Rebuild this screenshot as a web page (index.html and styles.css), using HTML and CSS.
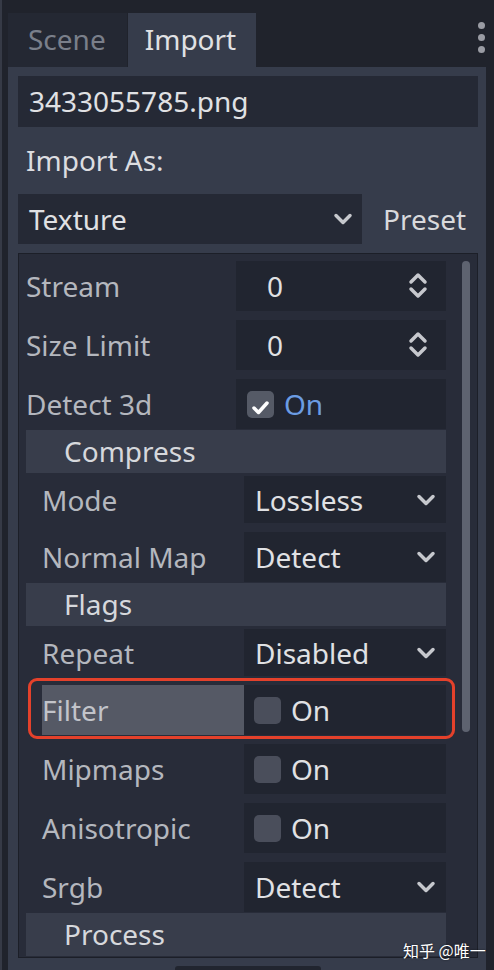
FILE: index.html
```html
<!DOCTYPE html>
<html lang="en">
<head>
    <meta charset="UTF-8">
    <meta name="viewport" content="width=device-width, initial-scale=1.0">
    <title>Import</title>
    <link rel="stylesheet" href="styles.css">
</head>
<body>

<div class="edge"></div>
<div class="dock">
    <div class="tabs">
        <div class="tab">Scene</div>
        <div class="tab active">Import</div>
        <div class="menu"><span></span><span></span><span></span></div>
    </div>

    <div class="panel">
        <div class="file">3433055785.png</div>
        <div class="as-label">Import As:</div>
        <div class="import-row">
            <div class="select">
                <span>Texture</span>
                <svg class="chev" width="20" height="12" viewBox="0 0 20 12"><path d="M3 2.5 L10 9.5 L17 2.5"/></svg>
            </div>
            <div class="preset">Preset</div>
        </div>

        <div class="inspector">
            <div class="props">
                <div class="prop">
                    <div class="name">Stream</div>
                    <div class="value spin"><span>0</span>
                        <svg class="arrows" width="20" height="30" viewBox="0 0 20 30"><path d="M3 11 L10 4 L17 11"/><path d="M3 18 L10 25 L17 18"/></svg>
                    </div>
                </div>
                <div class="prop">
                    <div class="name">Size Limit</div>
                    <div class="value spin"><span>0</span>
                        <svg class="arrows" width="20" height="30" viewBox="0 0 20 30"><path d="M3 11 L10 4 L17 11"/><path d="M3 18 L10 25 L17 18"/></svg>
                    </div>
                </div>
                <div class="prop">
                    <div class="name">Detect 3d</div>
                    <div class="value check">
                        <span class="box on"><svg width="27" height="27" viewBox="0 0 27 27"><path d="M7 14 L11.5 18.5 L20 9"/></svg></span>
                        <span class="blue">On</span>
                    </div>
                </div>

                <div class="section">Compress</div>
                <div class="prop sub">
                    <div class="name">Mode</div>
                    <div class="value drop"><span>Lossless</span>
                        <svg class="chev" width="20" height="12" viewBox="0 0 20 12"><path d="M3 2.5 L10 9.5 L17 2.5"/></svg>
                    </div>
                </div>
                <div class="prop sub">
                    <div class="name">Normal Map</div>
                    <div class="value drop"><span>Detect</span>
                        <svg class="chev" width="20" height="12" viewBox="0 0 20 12"><path d="M3 2.5 L10 9.5 L17 2.5"/></svg>
                    </div>
                </div>

                <div class="section">Flags</div>
                <div class="prop sub">
                    <div class="name">Repeat</div>
                    <div class="value drop"><span>Disabled</span>
                        <svg class="chev" width="20" height="12" viewBox="0 0 20 12"><path d="M3 2.5 L10 9.5 L17 2.5"/></svg>
                    </div>
                </div>
                <div class="prop sub marked">
                    <div class="name hl">Filter</div>
                    <div class="value check"><span class="box"></span><span>On</span></div>
                    <div class="frame"></div>
                </div>
                <div class="prop sub">
                    <div class="name">Mipmaps</div>
                    <div class="value check"><span class="box"></span><span>On</span></div>
                </div>
                <div class="prop sub">
                    <div class="name">Anisotropic</div>
                    <div class="value check"><span class="box"></span><span>On</span></div>
                </div>
                <div class="prop sub">
                    <div class="name">Srgb</div>
                    <div class="value drop"><span>Detect</span>
                        <svg class="chev" width="20" height="12" viewBox="0 0 20 12"><path d="M3 2.5 L10 9.5 L17 2.5"/></svg>
                    </div>
                </div>

                <div class="section">Process</div>
            </div>
            <div class="scroll"></div>
        </div>

        <div class="footer"><div class="btn"></div></div>
    </div>
</div>

<div class="watermark">知乎 @唯一</div>

</body>
</html>
```

FILE: styles.css
```css
body {
    margin: 0;
    height: 970px;
    overflow: hidden;
    display: flex;
    background-color: #20232c;
    font-family: "Noto Sans", "Noto Sans CJK SC", sans-serif;
    font-size: 28px;
    color: #e0e1e4;
}
.edge {
    width: 2px;
    margin-right: 6px;
    background: #363a46;
}
.dock {
    width: 478px;
    display: flex;
    flex-direction: column;
}

/* tab strip */
.tabs {
    height: 67px;
    display: flex;
    align-items: flex-end;
    flex-shrink: 0;
}
.tab {
    height: 54px;
    line-height: 52px;
    padding: 0 21px 0 20px;
    background: #242833;
    color: #7a7f8a;
}
.tab.active {
    margin-left: 1px;
    padding: 0 20px 0 17px;
    background: #363c4b;
    color: #e0e1e4;
}
.menu {
    margin-left: auto;
    align-self: flex-start;
    margin-top: 22px;
    margin-right: 1px;
    display: flex;
    flex-direction: column;
    gap: 5px;
}
.menu span {
    width: 7px;
    height: 7px;
    border-radius: 50%;
    background: #9a9ca4;
}

/* import panel */
.panel {
    flex: 1;
    background: #363c4b;
    padding: 9px 8px 0 10px;
}
.file {
    height: 51px;
    line-height: 51px;
    padding-left: 11px;
    background: #252935;
}
.as-label {
    height: 67px;
    line-height: 66px;
    padding-left: 8px;
    color: #dcdde0;
}
.import-row {
    display: flex;
    align-items: center;
    height: 50px;
}
.select {
    width: 344px;
    height: 50px;
    box-sizing: border-box;
    padding: 0 9px 0 11px;
    display: flex;
    align-items: center;
    justify-content: space-between;
    background: #252935;
}
.preset {
    margin-left: 21px;
    color: #d8d9dc;
}
.chev path, .arrows path {
    fill: none;
    stroke: #c6c8cd;
    stroke-width: 3.5;
    stroke-linecap: round;
    stroke-linejoin: round;
}

/* inspector */
.inspector {
    margin-top: 9px;
    height: 705px;
    box-sizing: border-box;
    border: 1px solid #1c1f28;
    background: #282c39;
    padding: 7px 0 0 7px;
    display: flex;
    overflow: hidden;
}
.props {
    width: 420px;
    display: flex;
    flex-direction: column;
    flex-shrink: 0;
}
.scroll {
    margin-left: 16px;
    width: 8px;
    height: 471px;
    border-radius: 4px;
    background: #5e6370;
}
.prop {
    display: flex;
    height: 50px;
    margin-bottom: 9px;
    flex-shrink: 0;
}
.prop .name {
    width: 210px;
    display: flex;
    align-items: center;
    color: #b4b7be;
}
.prop.sub {
    padding-left: 16px;
}
.prop.sub .name {
    width: 202px;
}
.prop .name.hl {
    background: #555965;
    color: #c2c4ca;
}
.value {
    flex: 1;
    display: flex;
    align-items: center;
    background: #212530;
}
.value.spin {
    padding-left: 31px;
    justify-content: space-between;
}
.value.spin .arrows {
    margin-right: 18px;
}
.value.drop {
    padding-left: 11px;
    justify-content: space-between;
}
.value.drop .chev {
    margin-right: 10px;
}
.value.check {
    padding-left: 10px;
    gap: 10px;
}
.prop:not(.sub) .value.check {
    padding-left: 11px;
}
.box {
    width: 27px;
    height: 27px;
    border-radius: 5px;
    background: #4a4e5b;
}
.box.on {
    background: #555a66;
}
.box svg path {
    fill: none;
    stroke: #ffffff;
    stroke-width: 3.5;
    stroke-linecap: round;
    stroke-linejoin: round;
}
.blue {
    color: #6b9ce3;
}
.section {
    height: 43px;
    line-height: 43px;
    flex-shrink: 0;
    margin-top: -8px;
    margin-bottom: 3px;
    padding-left: 38px;
    background: #383d4b;
    color: #d6d8dc;
}
.section + .prop {
    height: 47px;
}

/* red marker around Filter */
.marked {
    position: relative;
}
.frame {
    position: absolute;
    left: 2px;
    right: -9px;
    top: -7px;
    bottom: -4px;
    border: 3px solid #e4412b;
    border-radius: 9px;
}

.footer {
    padding-top: 8px;
    display: flex;
    justify-content: center;
}
.btn {
    width: 146px;
    height: 30px;
    border-radius: 3px;
    background: #21252f;
}

.watermark {
    position: absolute;
    left: 403px;
    top: 938px;
    white-space: nowrap;
    font-family: "Noto Sans CJK SC", sans-serif;
    font-size: 16px;
    color: #ffffff;
    text-shadow: 0 0 2px rgba(0, 0, 0, 0.6);
}
```
